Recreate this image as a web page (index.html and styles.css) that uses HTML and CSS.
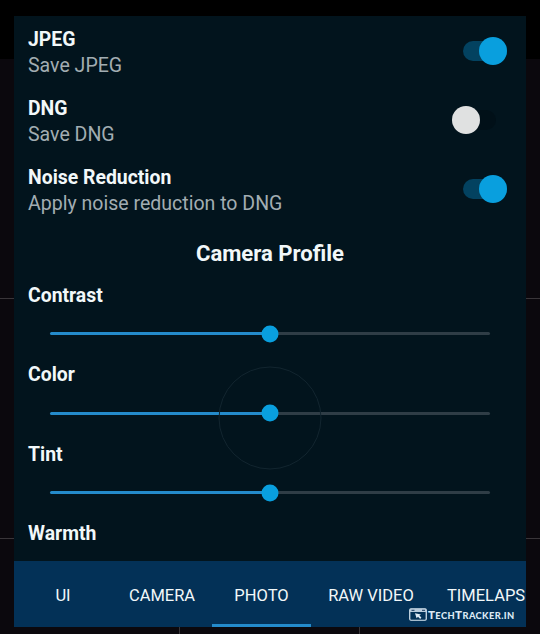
FILE: index.html
```html
<!DOCTYPE html>
<html lang="en">
<head>
<meta charset="utf-8">
<title>Camera settings</title>
<link rel="stylesheet" href="styles.css">
</head>
<body>
<div class="viewfinder">
  <i class="grid-h first"></i><i class="grid-h second"></i>
  <i class="grid-v first"></i><i class="grid-v second"></i>
</div>
<main class="panel">
  <section class="settings">
    <div class="row">
      <div><h2>JPEG</h2><p>Save JPEG</p></div>
      <span class="switch on"></span>
    </div>
    <div class="row">
      <div><h2>DNG</h2><p>Save DNG</p></div>
      <span class="switch"></span>
    </div>
    <div class="row">
      <div><h2>Noise Reduction</h2><p>Apply noise reduction to DNG</p></div>
      <span class="switch on"></span>
    </div>
    <h1>Camera Profile</h1>
    <div class="control"><h2>Contrast</h2><div class="slider"><i class="thumb"></i></div></div>
    <div class="control"><h2>Color</h2><div class="slider"><i class="ripple"></i><i class="thumb"></i></div></div>
    <div class="control"><h2>Tint</h2><div class="slider"><i class="thumb"></i></div></div>
    <div class="control"><h2>Warmth</h2></div>
  </section>
  <nav class="tabs">
    <span class="tab ui">UI</span>
    <span class="tab camera">CAMERA</span>
    <span class="tab photo active">PHOTO</span>
    <span class="tab raw">RAW VIDEO</span>
    <span class="tab timelapse">TIMELAPS</span>
  </nav>
</main>
<div class="watermark">
  <svg width="18" height="13" viewBox="0 0 18 13">
    <rect x=".75" y=".75" width="16.5" height="11.5" rx="1.2" fill="none" stroke="#dce9f4" stroke-width="1.2"/>
    <path d="M1 1h16v3H1z" fill="#b9cbdc"/>
    <path d="M2.5 2.3h3M13 2.3h3" stroke="#17385c" stroke-width="1"/>
    <path d="M6 5.2l6 1.2-1.6 1.2 2 2-1.2 1.3-2.2-2.1-1.4 1.5z" fill="#dce9f4"/>
  </svg>
  <span class="brand"><b>T</b>ECH<b>T</b>RACKER.IN</span>
</div>
</body>
</html>
```
FILE: styles.css
```css
* { box-sizing: border-box; }
body {
  margin: 0;
  width: 540px;
  height: 634px;
  padding: 16px 14px 7px;
  position: relative;
  overflow: hidden;
  background: linear-gradient(#000 59px, #0b080d 59px);
  font-family: Roboto, sans-serif;
  color: #f2f8f9;
}
h1, h2, p { margin: 0; }
.viewfinder { position: absolute; inset: 0; }
.grid-h, .grid-v { position: absolute; background: #393539; }
.grid-h { left: 0; width: 100%; height: 1px; }
.grid-h.first { top: 298px; }
.grid-h.second { top: 538px; }
.grid-v { top: 59px; bottom: 0; width: 1px; }
.grid-v.first { left: 179px; }
.grid-v.second { left: 359px; }

.panel {
  position: relative;
  height: 611px;
  display: flex;
  flex-direction: column;
  background: #02141d;
  overflow: hidden;
}
.settings { height: 545px; padding: 9px 14px 0; overflow: hidden; }
.row {
  height: 69px;
  display: flex;
  justify-content: space-between;
  padding-right: 5px;
}
h2 { height: 27px; padding-top: .8px; font-size: 19.4px; line-height: 27px; font-weight: 700; }
p { font-size: 19.55px; line-height: 27px; color: #a2adb2; }
.switch {
  position: relative;
  width: 33px;
  height: 20px;
  margin: 16px 11px 0 0;
  border-radius: 10px;
  background: #011018;
}
.switch::after {
  content: "";
  position: absolute;
  left: -11px;
  top: -4px;
  width: 28px;
  height: 28px;
  border-radius: 50%;
  background: #e0e1e1;
}
.switch.on { width: 44px; margin-right: 0; background: #034260; }
.switch.on::after { left: auto; right: 0; background: #099fde; }
h1 {
  height: 49px;
  font-size: 22.1px;
  line-height: 43px;
  font-weight: 700;
  text-align: center;
}
.control { height: 79.5px; }
.slider {
  position: relative;
  height: 3px;
  margin: 24px 22px 0;
  border-radius: 2px;
  background: linear-gradient(90deg, #248bcb 50%, #2f3d46 50%);
}
.thumb, .ripple {
  position: absolute;
  left: 50%;
  top: 50%;
  border-radius: 50%;
  transform: translate(-50%, -50%);
}
.thumb { width: 17px; height: 17px; background: #099fde; }
.ripple { width: 103px; height: 103px; margin-top: 5px; border: 1px solid #12252f; }

.tabs {
  height: 66px;
  display: flex;
  flex: none;
  background: #033157;
  font-size: 16.5px;
  line-height: 69px;
}
.tab { flex: none; text-align: center; white-space: nowrap; }
.ui { width: 98px; }
.camera { width: 100px; }
.photo { width: 99px; }
.raw { width: 120px; }
.timelapse { padding-left: 16px; }
.active { border-bottom: 3px solid #248bcb; }

.watermark {
  position: absolute;
  left: 409px;
  top: 607px;
  display: flex;
  align-items: center;
  gap: 1px;
  height: 14px;
  color: #dce9f4;
  font: 900 9.3px/14px Lato, sans-serif;
  letter-spacing: .4px;
  white-space: nowrap;
}
.brand { padding-top: 2px; }
.brand b { font-size: 11.5px; font-weight: 900; }
```
